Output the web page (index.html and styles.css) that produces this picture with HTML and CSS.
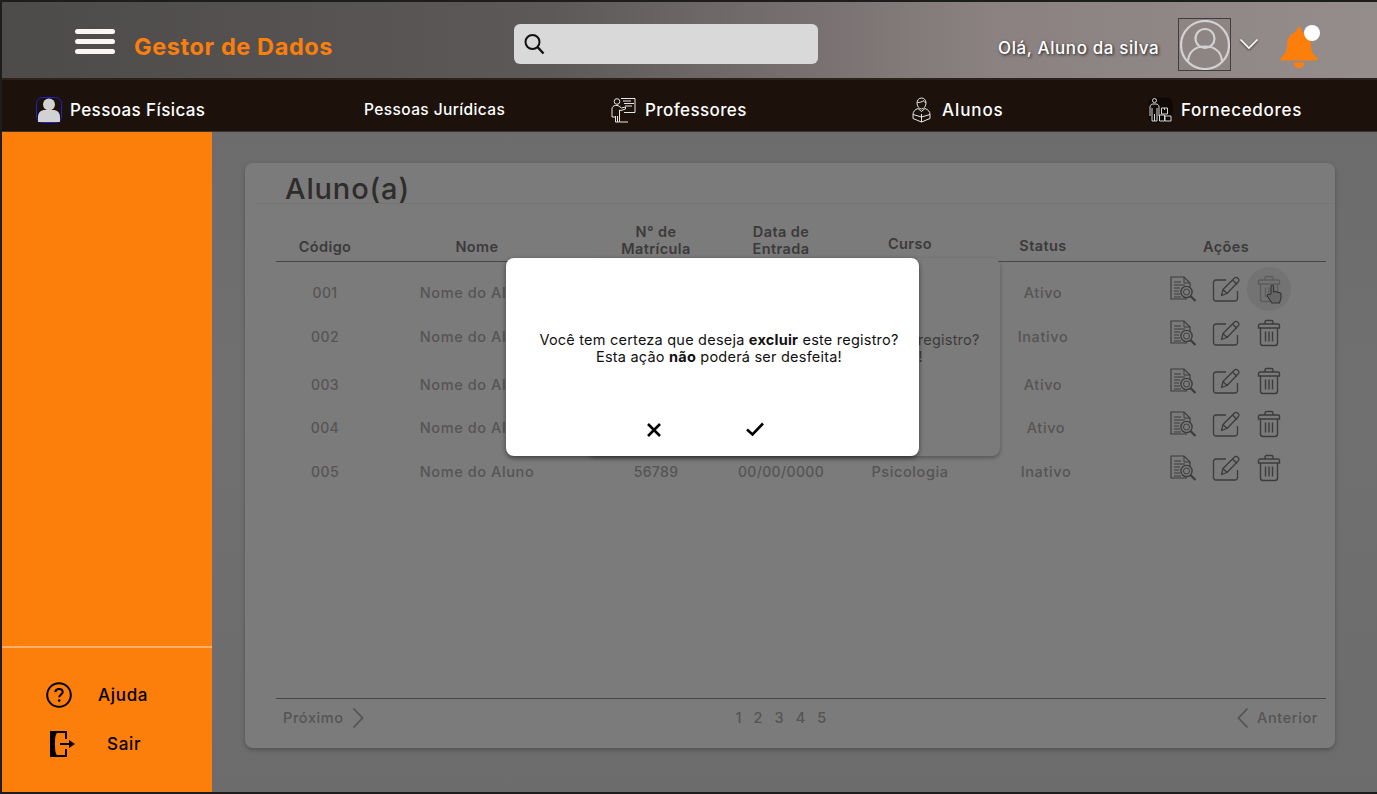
FILE: index.html
```html
<!DOCTYPE html>
<html lang="pt-BR">
<head>
<meta charset="utf-8">
<title>Gestor de Dados</title>
<link rel="stylesheet" href="styles.css">
</head>
<body>
<svg class="defs" width="0" height="0" aria-hidden="true">
  <defs>
    <symbol id="i-doc" viewBox="0 0 28 28">
      <path d="M18 24H2V2h13l6 6v5" fill="none" stroke="currentColor" stroke-width="1.2"/>
      <path d="M15 2v6h6" fill="none" stroke="currentColor" stroke-width="1"/>
      <path d="M5 7h7M5 10h11M5 13h6M5 16h5M5 19h6M5 22h7" fill="none" stroke="currentColor" stroke-width="1.1"/>
      <circle cx="17.5" cy="17" r="5.6" fill="none" stroke="currentColor" stroke-width="1.4"/>
      <circle cx="17.5" cy="17" r="3" fill="none" stroke="currentColor" stroke-width="1"/>
      <path d="M21.5 21l5 5" fill="none" stroke="currentColor" stroke-width="2.2"/>
    </symbol>
    <symbol id="i-edit" viewBox="0 0 28 28">
      <path d="M14 5H4a2.500 2.500 0 0 0-2.500 2.500v16A2.500 2.500 0 0 0 4 26h19a2.500 2.500 0 0 0 2.500-2.500V16" fill="none" stroke="currentColor" stroke-width="1.3"/>
      <path d="M9.500 20.500l1.500-6L22.500 3a2 2 0 0 1 3 0l.8.800a2 2 0 0 1 0 3L15 18.500zM11 14.500l4 4M20.500 5l4.500 4.500" fill="none" stroke="currentColor" stroke-width="1.3" stroke-linejoin="round"/>
    </symbol>
    <symbol id="i-trash" viewBox="0 0 24 28">
      <path d="M1.500 6.500a1.500 1.500 0 0 1 1.500-1.500h18a1.500 1.500 0 0 1 1.500 1.500V9h-21zM8 5V3a1.500 1.500 0 0 1 1.500-1.500h5A1.500 1.500 0 0 1 16 3v2M3.500 9v15a2.500 2.500 0 0 0 2.500 2.500h12a2.500 2.500 0 0 0 2.500-2.500V9M8.500 12.500v10M12 12.500v10M15.500 12.500v10" fill="none" stroke="currentColor" stroke-width="1.4"/>
    </symbol>
  </defs>
</svg>

<div class="app">
  <header class="topbar">
    <div class="brand">
      <span class="burger"><i></i><i></i><i></i></span>
      <span class="brand-name">Gestor de Dados</span>
    </div>
    <div class="search">
      <svg width="22" height="22" viewBox="0 0 22 22"><circle cx="9.500" cy="9" r="7" fill="none" stroke="#111" stroke-width="2"/><path d="M14.500 14l6 6.500" stroke="#111" stroke-width="2.400" fill="none"/></svg>
    </div>
    <div class="user">
      <span class="greeting">Olá, Aluno da silva</span>
      <span class="avatar">
        <svg width="50" height="50" viewBox="0 0 50 50"><circle cx="25" cy="25" r="24" fill="none" stroke="#d3d1d1" stroke-width="2.200"/><circle cx="25" cy="18.500" r="9.500" fill="none" stroke="#d3d1d1" stroke-width="2.200"/><path d="M8 41c1-10 8-14.500 17-14.500S41 31 42 41" fill="none" stroke="#d3d1d1" stroke-width="2.200"/></svg>
      </span>
      <svg class="caret" width="20" height="12" viewBox="0 0 20 12"><path d="M1.500 1.500L10 10l8.500-8.500" fill="none" stroke="#fff" stroke-width="1.600"/></svg>
      <span class="bell">
        <svg width="42" height="44" viewBox="0 0 42 44"><path d="M21 3a2.500 2.500 0 0 1 2.500 2.500v2.200C30 9.500 33 14.500 33 21c0 6 2 9.500 6.500 13a1.500 1.500 0 0 1-1 2.500h-35a1.500 1.500 0 0 1-1-2.500C7 30.500 9 27 9 21c0-6.500 3-11.500 9.500-13.300V5.500A2.500 2.500 0 0 1 21 3zM15.500 38.500h11a5.500 5.500 0 0 1-11 0z" fill="#fc7e0b"/></svg>
        <i class="bell-dot"></i>
      </span>
    </div>
  </header>

  <nav class="tabs">
    <a class="tab">
      <svg width="26" height="26" viewBox="0 0 26 26"><rect x="0.500" y="0.500" width="25" height="25" rx="6" fill="#1c120b" stroke="#2222cc"/><circle cx="13" cy="7.500" r="6" fill="#d2d2d2"/><path d="M2 25v-5c0-4.500 3-7 7-7h8c4 0 7 2.500 7 7v5z" fill="#d2d2d2"/></svg>
      Pessoas Físicas
    </a>
    <a class="tab tab-small">Pessoas Jurídicas</a>
    <a class="tab">
      <svg width="26" height="26" viewBox="0 0 26 26" fill="none" stroke="#e6e6e6" stroke-width="1"><circle cx="6" cy="4.500" r="2.800"/><path d="M1 20v-8c0-2 1.500-3.500 3.500-3.500H7l3.500 2.500 4-1v2l-4.500 1.500L8.500 13V25H4.500v-6M6.500 25v-6M1 20h3M9 25h8"/><path d="M10 1.500h14v14H13M12 4h8M13 6.500h10M14 9h7"/></svg>
      Professores
    </a>
    <a class="tab tab-alunos">
      <svg width="19" height="26" viewBox="0 0 19 26" fill="none" stroke="#e6e6e6" stroke-width="1"><path d="M5 6c0-3 2-5 4.500-5S14 3 14 6s-2 6-4.500 6S5 9 5 6zM5.500 5.500c2 0 5-.5 6-2 .5 1.500 1.500 2 2.500 2"/><path d="M6 11.500c-3 1-5 3-5 6v4l8.500 3.500L18 21.500v-4c0-3-2-5-5-6l-3.500 3zM9.500 17v8M1 17.500L9.500 20l8.500-2.500"/></svg>
      Alunos
    </a>
    <a class="tab tab-supplier">
      <svg width="25" height="26" viewBox="0 0 25 26" fill="none" stroke="#d8d8d8" stroke-width="1"><rect x="0.500" y="0.500" width="24" height="25" rx="6" fill="#0e0906" stroke="none"/><circle cx="6.500" cy="3.500" r="2"/><path d="M2 19v-9c0-2 1.500-3 3-3h3c1.500 0 3 1 3 3v9M4 11v13h2.500v-7M6.500 24H9V11M13.500 11h6v6h-6zM16.500 11v2M11.500 18h5v6h-5zM17 19h6v5h-6z"/></svg>
      Fornecedores
    </a>
  </nav>

  <div class="body">
    <aside class="sidebar">
      <div class="side-actions">
        <a class="side-link">
          <svg width="26" height="26" viewBox="0 0 26 26"><circle cx="13" cy="13" r="11.800" fill="none" stroke="#000" stroke-width="2"/><path d="M9.300 10.200c.2-2.200 1.800-3.300 3.800-3.300s3.600 1.200 3.600 3c0 2.700-3.500 2.700-3.500 5.300" fill="none" stroke="#000" stroke-width="2"/><circle cx="13.200" cy="18.600" r="1.300"/></svg>
          <span class="side-label">Ajuda</span>
        </a>
        <a class="side-link side-link-exit">
          <svg width="26" height="26" viewBox="0 0 26 26"><path d="M0 0h17v8h-2V2H7C5.500 4 5 6 5 13s.5 9 2 11h8v-6h2v8H0z"/><path d="M10 12h9V9l6 4-6 4v-3h-9z"/></svg>
          <span class="side-label side-label-exit">Sair</span>
        </a>
      </div>
    </aside>

    <main class="main">
      <section class="card">
        <h1 class="card-title">Aluno(a)</h1>
        <div class="table">
          <div class="row head">
            <span>Código</span>
            <span>Nome</span>
            <span class="head-up">N° de<br>Matrícula</span>
            <span class="head-up">Data de<br>Entrada</span>
            <span class="head-mid">Curso</span>
            <span class="head-status">Status</span>
            <span class="col-actions">Ações</span>
          </div>

          <div class="row item first">
            <span>001</span><span>Nome do Aluno</span><span></span><span></span><span></span><span class="status">Ativo</span>
            <span class="col-actions icons">
              <svg class="ic-doc"><use href="#i-doc"/></svg>
              <svg class="ic-edit"><use href="#i-edit"/></svg>
              <span class="hovered">
                <svg class="ic-trash faded"><use href="#i-trash"/></svg>
                <svg class="hand" width="18" height="20" viewBox="0 0 18 20"><path d="M5 10V2.500a1.300 1.300 0 0 1 2.600 0V8l1-.3a1.300 1.300 0 0 1 1.600.5l.6-.2a1.300 1.300 0 0 1 1.700.7l.7-.1a1.500 1.500 0 0 1 1.800 1.400V14l-1.500 5H6l-4.500-6.500a1.400 1.400 0 0 1 2-1.900z" fill="#666" stroke="#333" stroke-width="1.100"/></svg>
              </span>
            </span>
          </div>
          <div class="row item">
            <span>002</span><span>Nome do Aluno</span><span></span><span></span><span></span><span class="status">Inativo</span>
            <span class="col-actions icons">
              <svg class="ic-doc"><use href="#i-doc"/></svg>
              <svg class="ic-edit"><use href="#i-edit"/></svg>
              <span class="plain"><svg class="ic-trash"><use href="#i-trash"/></svg></span>
            </span>
          </div>
          <div class="row item third">
            <span>003</span><span>Nome do Aluno</span><span></span><span></span><span></span><span class="status">Ativo</span>
            <span class="col-actions icons">
              <svg class="ic-doc"><use href="#i-doc"/></svg>
              <svg class="ic-edit"><use href="#i-edit"/></svg>
              <span class="plain"><svg class="ic-trash"><use href="#i-trash"/></svg></span>
            </span>
          </div>
          <div class="row item fourth">
            <span>004</span><span>Nome do Aluno</span><span></span><span></span><span></span><span class="status status-shift">Ativo</span>
            <span class="col-actions icons">
              <svg class="ic-doc"><use href="#i-doc"/></svg>
              <svg class="ic-edit"><use href="#i-edit"/></svg>
              <span class="plain"><svg class="ic-trash"><use href="#i-trash"/></svg></span>
            </span>
          </div>
          <div class="row item">
            <span>005</span><span>Nome do Aluno</span><span>56789</span><span>00/00/0000</span><span>Psicologia</span><span class="status status-shift">Inativo</span>
            <span class="col-actions icons">
              <svg class="ic-doc"><use href="#i-doc"/></svg>
              <svg class="ic-edit"><use href="#i-edit"/></svg>
              <span class="plain"><svg class="ic-trash"><use href="#i-trash"/></svg></span>
            </span>
          </div>
        </div>

        <footer class="pager">
          <a class="pager-link">Próximo
            <svg width="12" height="22" viewBox="0 0 12 22"><path d="M1.500 1.500L10.500 11l-9 9.500" fill="none" stroke="#545454" stroke-width="1.800"/></svg>
          </a>
          <div class="pages"><span>1</span><span>2</span><span>3</span><span>4</span><span>5</span></div>
          <a class="pager-link">
            <svg width="12" height="22" viewBox="0 0 12 22"><path d="M10.500 1.500L1.500 11l9 9.500" fill="none" stroke="#545454" stroke-width="1.800"/></svg>
            Anterior
          </a>
        </footer>
      </section>
    </main>
  </div>

  <div class="modal modal-back">
    <p class="modal-text">Você tem certeza que deseja <b>excluir</b> este registro?<br>Esta ação <b>não</b> poderá ser desfeita!</p>
  </div>
  <div class="modal modal-front">
    <p class="modal-text">Você tem certeza que deseja <b>excluir</b> este registro?<br>Esta ação <b>não</b> poderá ser desfeita!</p>
    <div class="modal-actions">
      <svg class="modal-x" width="16" height="16" viewBox="0 0 16 16"><path d="M2 2l12 12M14 2L2 14" stroke="#000" stroke-width="2.600" fill="none"/></svg>
      <svg class="modal-check" width="20" height="16" viewBox="0 0 20 16"><path d="M2 8.500l5.500 5L18 2.500" stroke="#000" stroke-width="2.600" fill="none"/></svg>
    </div>
  </div>
</div>
</body>
</html>
```

FILE: styles.css
```css
* { box-sizing: border-box; }
html, body { margin: 0; height: 100%; }
body {
  background: #1d1d1d;
  font-family: Inter, "Liberation Sans", sans-serif;
  overflow: hidden;
}
.defs { position: absolute; }
.app {
  position: relative;
  width: 1377px;
  height: 794px;
  padding: 2px 0 2px 2px;
  display: flex;
  flex-direction: column;
}

/* Top bar */
.topbar {
  height: 76px;
  display: grid;
  grid-template-columns: 512px 304px 1fr;
  align-items: center;
  background: linear-gradient(90deg, #4d4a4a 0%, #5d5959 40%, #8b8181 72%, #958c8c 100%);
}
.brand { display: flex; align-items: center; padding-left: 73px; margin-top: 13px; }
.burger { display: flex; flex-direction: column; gap: 5px; margin-top: -11px; }
.burger i { display: block; width: 40px; height: 5px; border-radius: 3px; background: #fbf6f4; }
.brand-name {
  margin-left: 19px;
  font-size: 23.500px;
  font-weight: 700;
  color: #fc7e0b;
  letter-spacing: 0.6px;
}
.search {
  height: 40px;
  margin-top: 8px;
  padding: 9px 0 0 9px;
  background: #d9d9d9;
  border-radius: 6px;
}
.search svg { display: block; }
.user { display: flex; align-items: center; padding-left: 180px; margin-top: 8px; }
.greeting {
  width: 180px;
  margin-top: 8px;
  font-size: 17px;
  font-weight: 500;
  color: #fff;
  white-space: nowrap;
  letter-spacing: 0.6px;
  text-shadow: 1px 1px 3px rgba(0, 0, 0, .8);
}
.avatar {
  width: 53px;
  height: 53px;
  padding: 1px;
  border: 1px solid #3f3d3d;
  background: #8d8484;
}
.avatar svg { display: block; }
.caret { margin-left: 8px; filter: drop-shadow(0 1px 1px rgba(0, 0, 0, .6)); }
.bell { position: relative; margin-left: 19px; width: 42px; height: 44px; margin-top: 4px; }
.bell svg { display: block; }
.bell-dot {
  position: absolute;
  right: 0;
  top: 1px;
  width: 16px;
  height: 16px;
  border-radius: 50%;
  background: #fff;
}

/* Tabs */
.tabs {
  height: 54px;
  padding: 8px 0 0 34px;
  display: grid;
  grid-template-columns: 328px 247px 301px 236px 1fr;
  align-items: center;
  background: #1c120b;
  border-top: 2px solid #2e2119;
  border-bottom: 1px solid #3a3532;
}
.tab {
  display: flex;
  align-items: center;
  gap: 8px;
  font-size: 17px;
  font-weight: 500;
  color: #fff;
  white-space: nowrap;
  letter-spacing: 0.4px;
}
.tab svg { flex: none; }
.tab-small { font-size: 15.500px; letter-spacing: 0.4px; }
.tab-alunos { gap: 11px; letter-spacing: 0.9px; }
.tab-supplier { letter-spacing: 0.7px; }

/* Body */
.body { flex: 1; display: flex; min-height: 0; }
.sidebar {
  flex: none;
  width: 210px;
  display: flex;
  flex-direction: column;
  justify-content: flex-end;
  background: #fc7e0b;
}
.side-actions {
  height: 146px;
  padding: 34px 0 0 44px;
  border-top: 2px solid #fdb06d;
  display: flex;
  flex-direction: column;
  gap: 23px;
}
.side-link {
  display: flex;
  align-items: center;
  height: 26px;
  font-size: 17px;
  font-weight: 500;
  letter-spacing: 0.7px;
  color: #000;
}
.side-link-exit { padding-left: 4px; }
.side-label { margin-left: 26px; }
.side-label-exit { margin-left: 31px; }

.main {
  flex: 1;
  min-width: 0;
  padding: 31px 42px 44px 33px;
  background: linear-gradient(180deg, #6c6c6c, #707070 40%, #6c6c6c);
}
.card {
  height: 585px;
  padding: 0 9px 0 31px;
  display: flex;
  flex-direction: column;
  background: #7b7b7b;
  border-radius: 8px;
  box-shadow: 0 2px 4px rgba(0, 0, 0, .25);
}
.card-title {
  margin: 0 -9px 0 -21px;
  height: 41px;
  padding: 12px 0 0 30px;
  font-size: 29px;
  line-height: 28px;
  font-weight: 500;
  color: #2f2c2c;
  letter-spacing: 0.85px;
  border-bottom: 1px solid #747474;
}

/* Table */
.table { flex: 1; }
.row {
  display: grid;
  grid-template-columns: 98px 206px 152px 98px 160px 106px 230px;
  align-items: center;
  text-align: center;
}
.head {
  height: 58px;
  padding-top: 9px;
  font-size: 14.500px;
  font-weight: 600;
  line-height: 17px;
  letter-spacing: 0.4px;
  color: #3c3a3a;
  border-bottom: 1px solid #464646;
  align-items: end;
}
.head > span { padding-bottom: 6px; }
.head > .head-up { padding-bottom: 4px; }
.head > .head-mid { padding-bottom: 9px; }
.head > .head-status { padding-bottom: 7px; }
.item {
  height: 44px;
  font-size: 14.500px;
  font-weight: 500;
  color: #565454;
  letter-spacing: 0.6px;
}
.item > span:nth-child(1),
.item > span:nth-child(3),
.item > span:nth-child(4) {
  font-size: 14px;
  letter-spacing: 0.35px;
}
.first { margin-top: 8px; }
.third { margin-top: 4px; }
.fourth { margin-top: -1px; }
.status-shift { padding-left: 6px; }
.col-actions { padding-left: 30px; }
.icons {
  display: grid;
  grid-template-columns: 43px 43px 43px;
  justify-content: center;
  justify-items: center;
  align-items: center;
  margin-bottom: 7px;
  color: #3c3c3c;
}
.ic-doc, .ic-edit { width: 28px; height: 28px; }
.ic-trash { width: 24px; height: 28px; display: block; }
.faded { color: #5c5c5c; }
.plain { display: block; }
.hovered {
  position: relative;
  width: 44px;
  height: 44px;
  margin-block: -8px;
  display: flex;
  align-items: center;
  justify-content: center;
  border-radius: 50%;
  background: #737373;
}
.hand { position: absolute; left: 19px; top: 17px; }

/* Pager */
.pager {
  height: 50px;
  padding: 0 8px 12px 7px;
  display: flex;
  align-items: center;
  justify-content: space-between;
  border-top: 1px solid #464646;
  font-size: 14.500px;
  font-weight: 500;
  color: #565454;
}
.pager-link { display: flex; align-items: center; gap: 8px; letter-spacing: 0.6px; }
.pages { display: flex; gap: 12px; margin-left: -39px; }

/* Modal */
.modal {
  position: absolute;
  top: 258px;
  width: 413px;
  height: 198px;
  border-radius: 8px;
}
.modal-back {
  left: 587px;
  background: #7b7b7b;
  color: #3c3a3a;
  box-shadow: 0 2px 4px rgba(0, 0, 0, .3);
}
.modal-front {
  left: 506px;
  background: #fff;
  color: #111;
  box-shadow: 0 2px 5px rgba(0, 0, 0, .5);
}
.modal-text {
  margin: 0;
  padding: 73px 0 0 13px;
  text-align: center;
  font-size: 14.500px;
  line-height: 17px;
  letter-spacing: 0.22px;
}
.modal-text b { font-weight: 700; }
.modal-actions {
  display: flex;
  align-items: center;
  padding: 54px 0 0 140px;
}
.modal-x { margin-top: 3px; }
.modal-check { margin-left: 83px; }
```
